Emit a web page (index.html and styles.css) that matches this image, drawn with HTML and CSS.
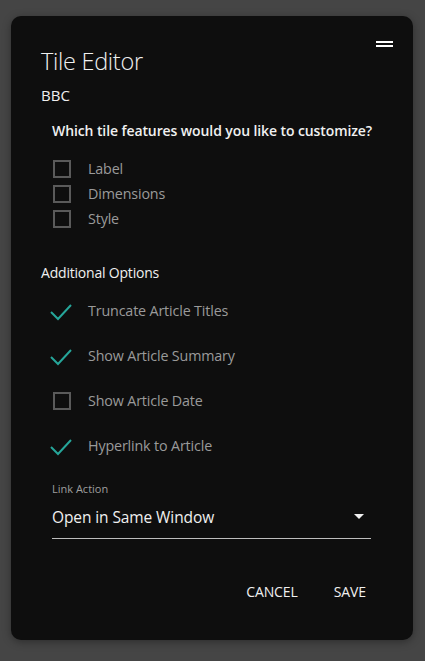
FILE: index.html
```html
<!DOCTYPE html>
<html>
<head>
<meta charset="utf-8">
<link rel="stylesheet" href="styles.css">
</head>
<body>
<div class="dialog">
  <div class="menu-icon"><span></span><span></span></div>
  <h1 class="title">Tile Editor</h1>
  <div class="subtitle">BBC</div>
  <div class="question">Which tile features would you like to customize?</div>
  <ul class="features">
    <li class="opt"><span class="box"></span><span class="lbl">Label</span></li>
    <li class="opt"><span class="box"></span><span class="lbl">Dimensions</span></li>
    <li class="opt"><span class="box"></span><span class="lbl">Style</span></li>
  </ul>
  <div class="section">Additional Options</div>
  <ul class="additional">
    <li class="opt2"><svg class="check" viewBox="0 0 24 18"><polyline points="2,9 9,16 22,2" /></svg><span class="lbl">Truncate Article Titles</span></li>
    <li class="opt2"><svg class="check" viewBox="0 0 24 18"><polyline points="2,9 9,16 22,2" /></svg><span class="lbl">Show Article Summary</span></li>
    <li class="opt2"><span class="box"></span><span class="lbl">Show Article Date</span></li>
    <li class="opt2"><svg class="check" viewBox="0 0 24 18"><polyline points="2,9 9,16 22,2" /></svg><span class="lbl">Hyperlink to Article</span></li>
  </ul>
  <div class="field">
    <div class="field-label">Link Action</div>
    <div class="select"><span>Open in Same Window</span><span class="caret"></span></div>
  </div>
  <div class="actions">
    <span class="btn">CANCEL</span>
    <span class="btn">SAVE</span>
  </div>
</div>
</body>
</html>
```
FILE: styles.css
```css
html, body { margin: 0; padding: 0; }
body {
  background: #454545;
  font-family: "Open Sans", "Noto Sans", sans-serif;
  width: 425px;
  height: 661px;
  overflow: hidden;
}
.dialog {
  position: relative;
  box-sizing: border-box;
  margin: 16px 0 0 11px;
  width: 402px;
  height: 624px;
  background: #0e0e0e;
  border-radius: 10px;
  box-shadow: 0 2px 8px rgba(0,0,0,0.35);
  padding: 29px 30px 0 30px;
  color: #e0e0e0;
}
.menu-icon {
  position: absolute;
  top: 25px;
  right: 20px;
  width: 17px;
  display: flex;
  flex-direction: column;
  gap: 2px;
}
.menu-icon span { display: block; height: 2px; background: #fff; }
.title {
  margin: 0;
  font-size: 23.5px;
  font-weight: 300;
  line-height: 32px;
  color: #f0f0f0;
  letter-spacing: -0.3px;
}
.subtitle {
  margin-top: 7px;
  font-size: 15px;
  line-height: 22px;
  color: #eee;
}
.question {
  margin: 15px 0 0 11px;
  font-size: 14px;
  font-weight: 600;
  line-height: 20px;
  color: #f0f0f0;
  letter-spacing: -0.1px;
}
ul { list-style: none; margin: 0; padding: 0; }
.features { margin: 15px 0 0 12px; }
.opt {
  display: flex;
  align-items: center;
  height: 25px;
}
.box {
  box-sizing: border-box;
  width: 18px;
  height: 18px;
  border: 2px solid #5a5a5a;
  flex: none;
}
.lbl {
  margin-left: 17px;
  font-size: 14.3px;
  color: #9a9a9a;
  letter-spacing: -0.15px;
}
.section {
  margin: 32px 0 0 0;
  font-size: 14px;
  font-weight: 500;
  line-height: 20px;
  color: #f0f0f0;
  letter-spacing: -0.2px;
}
.additional { margin: 5px 0 0 8px; }
.opt2 {
  display: flex;
  align-items: center;
  height: 45px;
}
.opt2 .box { margin-left: 4px; }
.opt2 .box + .lbl { margin-left: 17px; }
.check {
  width: 24px;
  height: 18px;
  flex: none;
  margin-top: 2px;
}
.check polyline {
  fill: none;
  stroke: #26a69a;
  stroke-width: 2;
}
.check + .lbl { margin-left: 15px; }
.field { margin: 13px 0 0 11px; width: 319px; }
.field-label {
  font-size: 11px;
  line-height: 16px;
  color: #9e9e9e;
}
.select {
  display: flex;
  align-items: center;
  justify-content: space-between;
  box-sizing: border-box;
  height: 42px;
  padding-bottom: 2px;
  border-bottom: 1px solid #bdbdbd;
  font-size: 15.5px;
  color: #f0f0f0;
  letter-spacing: -0.1px;
}
.caret {
  width: 0;
  height: 0;
  border-left: 5px solid transparent;
  border-right: 5px solid transparent;
  border-top: 5px solid #f0f0f0;
  margin-right: 7px;
}
.actions {
  display: flex;
  justify-content: flex-end;
  gap: 36px;
  margin: 43px 17px 0 0;
}
.btn {
  font-size: 14px;
  line-height: 20px;
  color: #f0f0f0;
  letter-spacing: -0.1px;
}
```
